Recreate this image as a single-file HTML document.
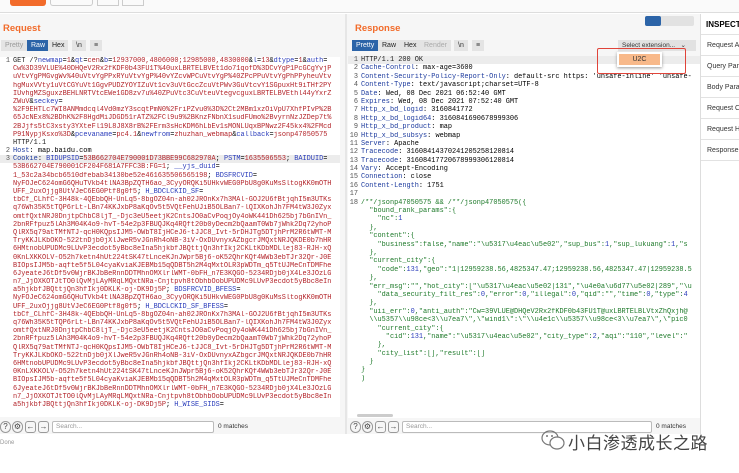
<!DOCTYPE html>
<html><head><meta charset="utf-8"><style>
*{margin:0;padding:0;box-sizing:border-box}
body{width:739px;height:473px;overflow:hidden;background:#fff;font-family:"Liberation Sans",sans-serif;position:relative}
.a{position:absolute}
.ed{position:absolute;background:#fff;font-family:"Liberation Mono",monospace;font-size:6.9px;overflow:hidden}
.ed div{height:8.2px;line-height:8.2px;white-space:pre;overflow:hidden}
.rs div{height:8.4px;line-height:8.4px}
.n{display:inline-block;width:10px;text-align:right;color:#555;margin-right:3px}
.r{color:#b3242a}.b{color:#2a3cbb}.k{color:#1d3b9e}.g{color:#1e7a2a}.x{color:#222}
.tab{position:absolute;top:40px;height:11px;font-size:7px;line-height:11px;padding:0 4px;background:#e4e4e4;color:#333}
.hd{position:absolute;font-weight:bold;color:#f26b2a;font-size:9.5px}
.ins div{height:21px;border-bottom:1px solid #e2e2e2;font-size:7px;line-height:21px;padding-left:6px;color:#333;white-space:nowrap}
.sb{position:absolute;top:421px;height:12px;border:1px solid #bbb;border-radius:2px;background:#fff;font-size:6.5px;color:#999;line-height:10px;padding-left:3px}
.ic{position:absolute;top:421px;width:11px;height:12px;border:1px solid #999;border-radius:3px;font-size:8px;line-height:10px;text-align:center;color:#444}
</style></head><body>
<div class="a" style="left:0;top:0;width:739px;height:13px;background:#fafafa;border-bottom:1px solid #ddd"></div>
<div class="a" style="left:10px;top:0;width:36px;height:6px;background:#f26b2a;border-radius:0 0 3px 3px"></div>
<div class="a" style="left:50px;top:0;width:43px;height:6px;border:1px solid #ccc;border-top:0;border-radius:0 0 3px 3px"></div>
<div class="a" style="left:97px;top:0;width:22px;height:6px;border:1px solid #ccc;border-top:0"></div>
<div class="a" style="left:122px;top:0;width:22px;height:6px;border:1px solid #ccc;border-top:0"></div>
<div class="a" style="left:0;top:14px;width:700px;height:420px;background:#f6f6f6"></div>
<div class="a" style="left:345px;top:14px;width:2px;height:420px;background:#e6e6e6"></div>
<div class="hd" style="left:3px;top:23px">Request</div>
<div class="hd" style="left:355px;top:23px">Response</div>
<div class="tab" style="left:1px;color:#999">Pretty</div>
<div class="tab" style="left:27px;background:#2c64a8;color:#fff">Raw</div>
<div class="tab" style="left:48px;color:#222">Hex</div>
<div class="tab" style="left:72px">\n</div>
<div class="tab" style="left:90px">≡</div>
<div class="tab" style="left:352px;background:#2c64a8;color:#fff">Pretty</div>
<div class="tab" style="left:378px;color:#222">Raw</div>
<div class="tab" style="left:400px;color:#222">Hex</div>
<div class="tab" style="left:420px;color:#aaa">Render</div>
<div class="tab" style="left:454px">\n</div>
<div class="tab" style="left:472px">≡</div>
<div class="a" style="left:645px;top:16px;width:49px;height:10px;background:#e2e2e2;border-radius:2px"></div>
<div class="a" style="left:645px;top:16px;width:16px;height:10px;background:#2c64a8;border-radius:2px"></div>
<div class="a" style="left:618px;top:40px;width:78px;height:11px;background:#e2e2e2;font-size:6.5px;line-height:11px;padding-left:4px;color:#333">Select extension... &nbsp; ⌄</div>
<div class="ed" style="left:0;top:57px;width:340px;height:360px">
<div><span class="n">1</span><span class="x">GET /?</span><span class="b">newmap</span>=<span class="r">1</span>&amp;<span class="b">qt</span>=<span class="r">cen</span>&amp;<span class="b">b</span>=<span class="r">12937000,4806000;12985000,4830000</span>&amp;<span class="b">l</span>=<span class="r">13</span>&amp;<span class="b">dtype</span>=<span class="r">1</span>&amp;<span class="b">auth</span>=</div>
<div class="r"><span class="n"></span>Cw%3D39VLUE%40DHQeV2Rx2fKDF0b43FU1T%40uxLBRTELBVEt1do71qofD%3DCvYgP1PcGCgYvjP</div>
<div class="r"><span class="n"></span>uVtvYgPMGvgWv%40uVtvYgPPxRYuVtvYgP%40vYZcvWPCuVtvYgP%40ZPcPPuVtvYgPhPPyheuVtv</div>
<div class="r"><span class="n"></span>hgMuxVVty1uVtCGYuVt1GgvPUDZYOYIZuVt1cv3uVtGccZcuVtPWv3GuVtcvY1SGpuxHt9iTHf2PY</div>
<div class="r"><span class="n"></span>IUvhgMZSguxzBEHLNRTVtcEWe1GD8zv7u%40ZPuVtc3CuVteuVtegvcguxLBRTELBVEthl44yYxrZ</div>
<div><span class="n"></span><span class="r">ZWuV</span>&amp;<span class="b">seckey</span>=</div>
<div class="r"><span class="n"></span>%2F9EHTLc7WI8ANMmdcql4Vd0mzY3scqtPmN0%2FriPZvu0%3D%2Ct2MBm1xzOiVpU7XhfPIvP%2B</div>
<div class="r"><span class="n"></span>65JcNEx8%2BDhK%2F8HgdMiJDGD51rATZ%2FCl9u9%2BKnzFNbnX1sudFUmo%2BvyrnNzJZDep7t%</div>
<div class="r"><span class="n"></span>2BJjfs5tC3xsty3YXteFl19L8J8X8rB%2FErm3sHcKDM6hLbEv1sMONLUqxBPNwz2F45kx4%2FMcd</div>
<div><span class="n"></span><span class="r">P91NypjKsxo%3D</span>&amp;<span class="b">pcevaname</span>=<span class="r">pc4.1</span>&amp;<span class="b">newfrom</span>=<span class="r">zhuzhan_webmap</span>&amp;<span class="b">callback</span>=<span class="r">jsonp47050575</span></div>
<div class="x"><span class="n"></span>HTTP/1.1</div>
<div><span class="n">2</span><span class="k">Host</span>: map.baidu.com</div>
<div style="background:#ececec"><span class="n">3</span><span class="k">Cookie</span>: <span class="b">BIDUPSID</span>=<span class="r">53B662704E790001D73BBE99C682970A</span>; <span class="b">PSTM</span>=<span class="r">1635506553</span>; <span class="b">BAIDUID</span>=</div>
<div><span class="n"></span><span class="r">53B662704E790001CF204F681A7FFC3B:FG=1</span>; <span class="b">__yjs_duid</span>=</div>
<div><span class="n"></span><span class="r">1_53c2a34bcb6510dfebab34130be52e461635506565198</span>; <span class="b">BDSFRCVID</span>=</div>
<div class="r"><span class="n"></span>NyFOJeC624omG6QHuTVkb4tlNA3BpZQTH6ao_3CyyORQKi5UHkvWEG0PbU8g0KuMsSltogKK0mOTH</div>
<div><span class="n"></span><span class="r">UFF_2uxOjjg8UtVJeC6EG0Ptf8g0f5</span>; <span class="b">H_BDCLCKID_SF</span>=</div>
<div class="r"><span class="n"></span>tbCf_CLhfC-3H48k-4QEbbQH-UnLq5-8bgOZ04n-ah02JROnKx7h3MAl-GOJ2U6fBtjqhI5m3UTKs</div>
<div class="r"><span class="n"></span>q76Wh35K5tTQP6rLt-LBn74KKJxbP8aKqOv5t5VQtFehUJiB5OLBan7-lQIXKohJh7FM4tW3J0Zyx</div>
<div class="r"><span class="n"></span>omtfQxtNRJ0DnjtpChbC8ljT_-Djc3eU5eetjK2CntsJO0aCvPoqjOy4oWK441Dh625bj7bGnIVn_</div>
<div class="r"><span class="n"></span>2bnRFfpuz5lAh3M04K4o9-hvT-54e2p3FBUQJKq4RQft20b0yDecm2bQaamT0Wb7jWhk2Dq72yhoP</div>
<div class="r"><span class="n"></span>QlRX5q79atTMfNTJ-qcH0KQpsIJM5-OWbT8IjHCeJ6-tJJC8_Ivt-5rDHJTg5DTjhPrM2R6tWMT-M</div>
<div class="r"><span class="n"></span>TryKKJLKbOKO-522tnDjb0jXlJweR5vJGnRh4oNB-3iV-OxDUvnyxAZbgcrJMQxtNRJQKDE0b7hHR</div>
<div class="r"><span class="n"></span>6HMtnobUPUDMc9LUvP3ecdot5yBbc8eIna5hjkbfJBQttjQn3hfIkj2CKLtKDbMDLlej83-RJH-xQ</div>
<div class="r"><span class="n"></span>0KnLXKKOLV-O52h7ketn4hUt224tSK47tLnceKJnJWpr5Bj6-oK52QhrKQf4WWb3ebTJr32Qr-J0E</div>
<div class="r"><span class="n"></span>BIOpsIJM5b-aqfte5f5L04cyaKviaKJEBMb15qQDBT5h2M4qMxtOLR3pWDTm_q5TtUJMeCnTDMFhe</div>
<div class="r"><span class="n"></span>6JyeateJ6tDf5v0WjrBKJbBeRnnDDTMhnOMXlrlWMT-0bFH_n7E3KQGO-5234RDjb0jX4Le3JOzLG</div>
<div class="r"><span class="n"></span>n7_JjOXKOTJtTO0lQvMjLAyMRqLMQxtNRa-Cnjtpvh8tObhbOobUPUDMc9LUvP3ecdot5yBbc8eIn</div>
<div><span class="n"></span><span class="r">a5hjkbfJBQttjQn3hfIkj0DKLK-oj-DK9Dj5P</span>; <span class="b">BDSFRCVID_BFESS</span>=</div>
<div class="r"><span class="n"></span>NyFOJeC624omG6QHuTVkb4tlNA3BpZQTH6ao_3CyyORQKi5UHkvWEG0PbU8g0KuMsSltogKK0mOTH</div>
<div><span class="n"></span><span class="r">UFF_2uxOjjg8UtVJeC6EG0Ptf8g0f5</span>; <span class="b">H_BDCLCKID_SF_BFESS</span>=</div>
<div class="r"><span class="n"></span>tbCf_CLhfC-3H48k-4QEbbQH-UnLq5-8bgOZ04n-ah02JROnKx7h3MAl-GOJ2U6fBtjqhI5m3UTKs</div>
<div class="r"><span class="n"></span>q76Wh35K5tTQP6rLt-LBn74KKJxbP8aKqOv5t5VQtFehUJiB5OLBan7-lQIXKohJh7FM4tW3J0Zyx</div>
<div class="r"><span class="n"></span>omtfQxtNRJ0DnjtpChbC8ljT_-Djc3eU5eetjK2CntsJO0aCvPoqjOy4oWK441Dh625bj7bGnIVn_</div>
<div class="r"><span class="n"></span>2bnRFfpuz5lAh3M04K4o9-hvT-54e2p3FBUQJKq4RQft20b0yDecm2bQaamT0Wb7jWhk2Dq72yhoP</div>
<div class="r"><span class="n"></span>QlRX5q79atTMfNTJ-qcH0KQpsIJM5-OWbT8IjHCeJ6-tJJC8_Ivt-5rDHJTg5DTjhPrM2R6tWMT-M</div>
<div class="r"><span class="n"></span>TryKKJLKbOKO-522tnDjb0jXlJweR5vJGnRh4oNB-3iV-OxDUvnyxAZbgcrJMQxtNRJQKDE0b7hHR</div>
<div class="r"><span class="n"></span>6HMtnobUPUDMc9LUvP3ecdot5yBbc8eIna5hjkbfJBQttjQn3hfIkj2CKLtKDbMDLlej83-RJH-xQ</div>
<div class="r"><span class="n"></span>0KnLXKKOLV-O52h7ketn4hUt224tSK47tLnceKJnJWpr5Bj6-oK52QhrKQf4WWb3ebTJr32Qr-J0E</div>
<div class="r"><span class="n"></span>BIOpsIJM5b-aqfte5f5L04cyaKviaKJEBMb15qQDBT5h2M4qMxtOLR3pWDTm_q5TtUJMeCnTDMFhe</div>
<div class="r"><span class="n"></span>6JyeateJ6tDf5v0WjrBKJbBeRnnDDTMhnOMXlrlWMT-0bFH_n7E3KQGO-5234RDjb0jX4Le3JOzLG</div>
<div class="r"><span class="n"></span>n7_JjOXKOTJtTO0lQvMjLAyMRqLMQxtNRa-Cnjtpvh8tObhbOobUPUDMc9LUvP3ecdot5yBbc8eIn</div>
<div><span class="n"></span><span class="r">a5hjkbfJBQttjQn3hfIkj0DKLK-oj-DK9Dj5P</span>; <span class="b">H_WISE_SIDS</span>=</div>
</div>
<div class="ed rs" style="left:348px;top:56px;width:352px;height:362px">
<div style="background:#ececec"><span class="n">1</span><span class="x">HTTP/1.1 200 OK</span></div>
<div><span class="n">2</span><span class="k">Cache-Control</span>: max-age=3600</div>
<div><span class="n">3</span><span class="k">Content-Security-Policy-Report-Only</span>: default-src https: 'unsafe-inline' 'unsafe-</div>
<div><span class="n">4</span><span class="k">Content-Type</span>: text/javascript;charset=UTF-8</div>
<div><span class="n">5</span><span class="k">Date</span>: Wed, 08 Dec 2021 06:52:40 GMT</div>
<div><span class="n">6</span><span class="k">Expires</span>: Wed, 08 Dec 2021 07:52:40 GMT</div>
<div><span class="n">7</span><span class="k">Http_x_bd_logid</span>: 3160841772</div>
<div><span class="n">8</span><span class="k">Http_x_bd_logid64</span>: 3160841690678999306</div>
<div><span class="n">9</span><span class="k">Http_x_bd_product</span>: map</div>
<div><span class="n">10</span><span class="k">Http_x_bd_subsys</span>: webmap</div>
<div><span class="n">11</span><span class="k">Server</span>: Apache</div>
<div><span class="n">12</span><span class="k">Tracecode</span>: 31608414370241205258120814</div>
<div><span class="n">13</span><span class="k">Tracecode</span>: 31608417720678999306120814</div>
<div><span class="n">14</span><span class="k">Vary</span>: Accept-Encoding</div>
<div><span class="n">15</span><span class="k">Connection</span>: close</div>
<div><span class="n">16</span><span class="k">Content-Length</span>: 1751</div>
<div><span class="n">17</span></div>
<div><span class="n">18</span><span class="g">/**/jsonp47050575 &amp;&amp; /**/jsonp47050575({</span></div>
<div class="g"><span class="n"></span>  "bound_rank_params":{</div>
<div class="g"><span class="n"></span>    "nc":<span class="b">1</span></div>
<div class="g"><span class="n"></span>  },</div>
<div class="g"><span class="n"></span>  "content":{</div>
<div class="g"><span class="n"></span>    "business":false,"name":"\u5317\u4eac\u5e02","sup_bus":<span class="b">1</span>,"sup_lukuang":<span class="b">1</span>,"s</div>
<div class="g"><span class="n"></span>  },</div>
<div class="g"><span class="n"></span>  "current_city":{</div>
<div class="g"><span class="n"></span>    "code":<span class="b">131</span>,"geo":"1|12959238.56,4825347.47;12959238.56,4825347.47|12959238.5</div>
<div class="g"><span class="n"></span>  },</div>
<div class="g"><span class="n"></span>  "err_msg":"","hot_city":["\u5317\u4eac\u5e02|131","\u4e0a\u6d77\u5e02|289","\u</div>
<div class="g"><span class="n"></span>    "data_security_filt_res":<span class="b">0</span>,"error":<span class="b">0</span>,"illegal":<span class="b">0</span>,"qid":"","time":<span class="b">0</span>,"type":<span class="b">4</span></div>
<div class="g"><span class="n"></span>  },</div>
<div class="g"><span class="n"></span>  "uii_err":<span class="b">0</span>,"anti_auth":"Cw=39VLUE@DHQeV2Rx2fKDF0b43FU1T@uxLBRTELBLVtxZhQxjh@</div>
<div class="g"><span class="n"></span>  \\u5357\\u98ce&lt;3\\u7ea7\",\"wind1\":\"\\u4e1c\\u5357\\u98ce&lt;3\\u7ea7\",\"pic0</div>
<div class="g"><span class="n"></span>    "current_city":{</div>
<div class="g"><span class="n"></span>      "cid":<span class="b">131</span>,"name":"\u5317\u4eac\u5e02","city_type":<span class="b">2</span>,"aqi":"110","level":"</div>
<div class="g"><span class="n"></span>    },</div>
<div class="g"><span class="n"></span>    "city_list":[],"result":[]</div>
<div class="g"><span class="n"></span>  }</div>
<div class="g"><span class="n"></span>}</div>
<div class="g"><span class="n"></span>)</div>
</div>
<div class="a" style="left:597px;top:48px;width:89px;height:26px;border:1.5px solid #e0443a;border-radius:2px"></div>
<div class="a" style="left:617px;top:52px;width:45px;height:15px;background:#fff;box-shadow:0 1px 3px #999"></div>
<div class="a" style="left:619px;top:54px;width:41px;height:11px;background:#f8b98a;font-size:7px;line-height:11px;text-align:center;color:#333">U2C</div>
<div class="a" style="left:357px;top:414px;width:36px;height:3px;background:#ccc;border-radius:2px"></div>
<div class="ic" style="left:0;border-radius:6px">?</div><div class="ic" style="left:12px;border-radius:6px">⚙</div>
<div class="ic" style="left:25px">←</div><div class="ic" style="left:38px">→</div>
<div class="sb" style="left:52px;width:162px">Search...</div>
<div class="a" style="left:218px;top:423px;font-size:6.5px;color:#333">0 matches</div>
<div class="ic" style="left:350px;border-radius:6px">?</div><div class="ic" style="left:362px;border-radius:6px">⚙</div>
<div class="ic" style="left:375px">←</div><div class="ic" style="left:388px">→</div>
<div class="sb" style="left:402px;width:250px">Search...</div>
<div class="a" style="left:656px;top:423px;font-size:6.5px;color:#333">0 matches</div>
<div class="a" style="left:700px;top:14px;width:39px;height:420px;background:#fff;border-left:1px solid #ddd">
<div style="height:21px;border-bottom:1px solid #e2e2e2;font-weight:bold;font-size:8px;line-height:21px;padding-left:5px;white-space:nowrap">INSPECTOR</div>
<div class="ins"><div>Request Attributes</div><div>Query Params</div><div>Body Params</div><div>Request Cookies</div><div>Request Headers</div><div>Response Headers</div></div>
</div>
<div class="a" style="left:0;top:440px;font-size:6px;color:#999">Done</div>
<svg class="a" style="left:540px;top:428px" width="26" height="24" viewBox="0 0 26 24"><ellipse cx="10" cy="10" rx="8" ry="7" fill="none" stroke="#777" stroke-width="1.2"/><ellipse cx="17" cy="15" rx="7" ry="6" fill="#fff" stroke="#777" stroke-width="1.2"/><circle cx="7" cy="8" r="1" fill="#777"/><circle cx="12" cy="8" r="1" fill="#777"/></svg>
<div class="a" style="left:568px;top:429px;font-family:'Liberation Sans','Noto Sans CJK SC',sans-serif;font-size:17px;color:#444;letter-spacing:0.5px">小白渗透成长之路</div>
</body></html>
